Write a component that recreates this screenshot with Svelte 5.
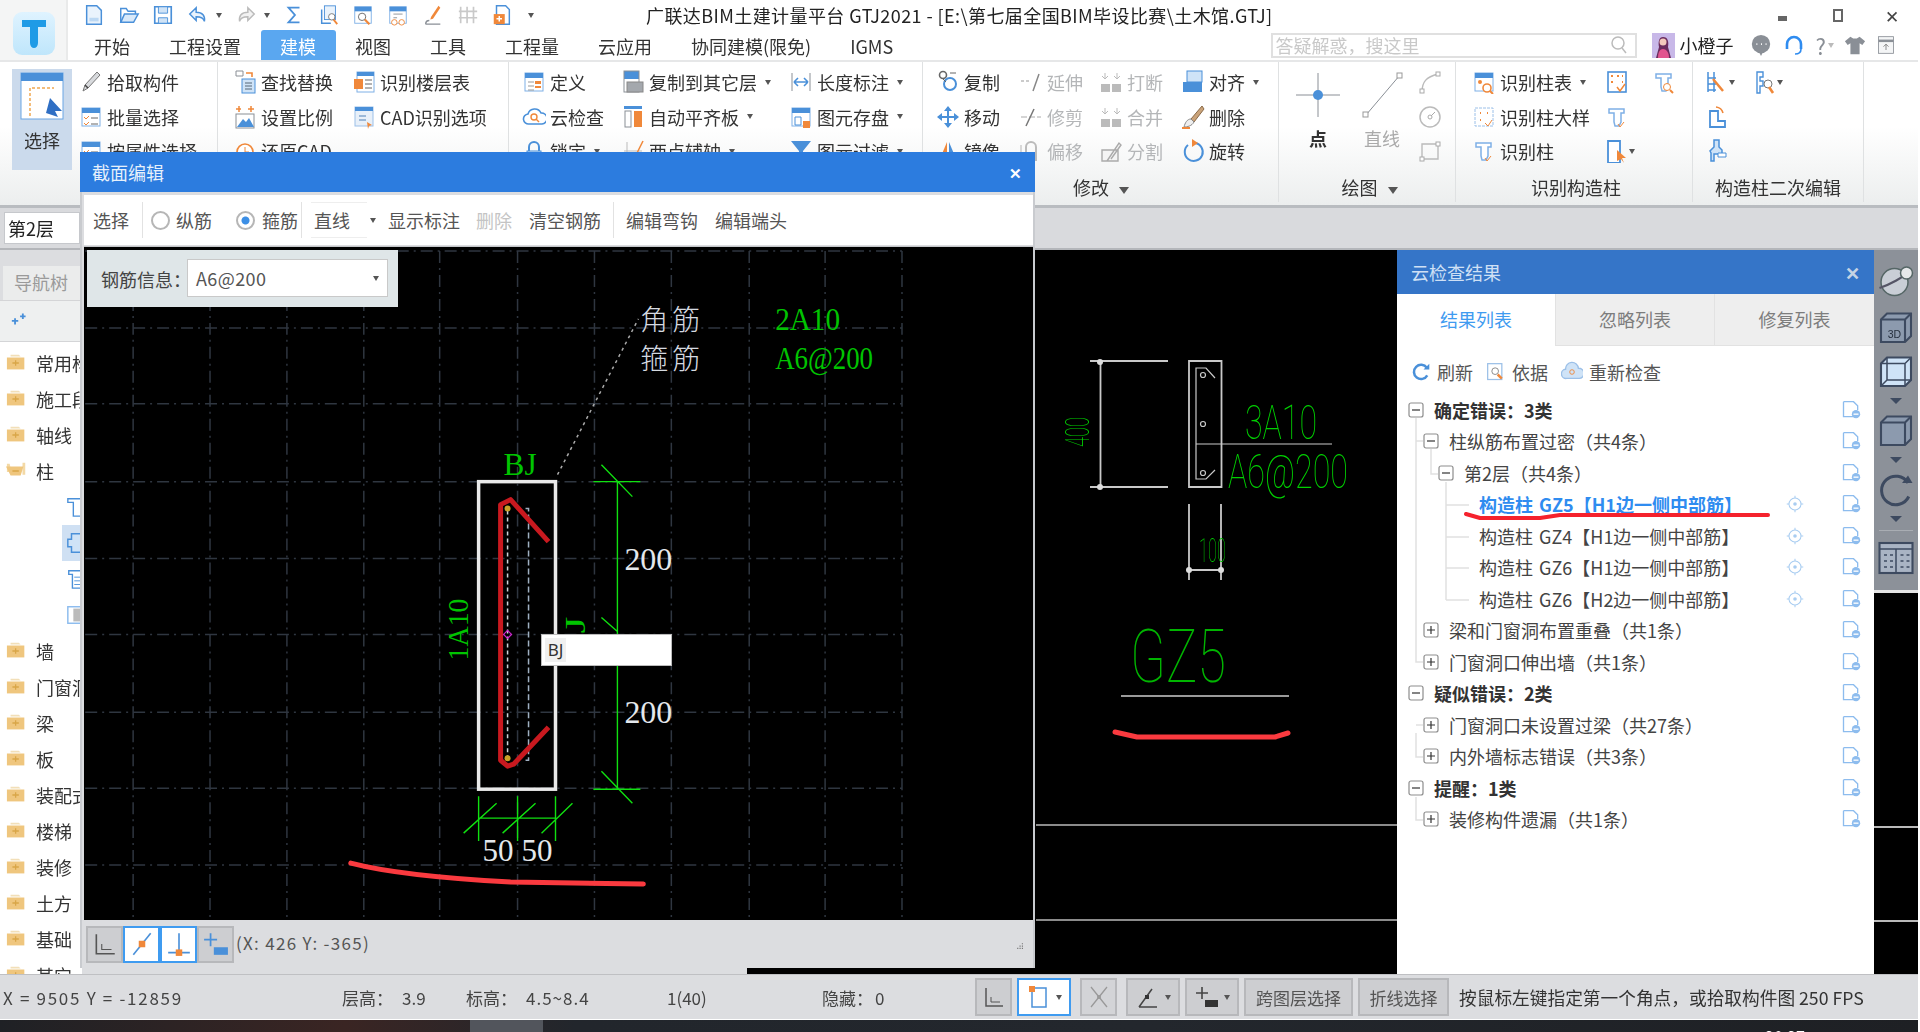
<script>
  const B = '#4a90d9', O = '#f0883a', G = '#8a8f96';
  const win = `<rect x="3" y="3" width="18" height="18" fill="#fff" stroke="#7fb0e6"/><rect x="3" y="3" width="18" height="5" fill="${B}"/>`;
  const col = `<path d="M4 4h15v4h-3v9l-2 4h-4l-1-4V8H4z" fill="#fff" stroke="#7fb0e6" stroke-width="1.5"/>`;
  const cube = `<path d="M2 7l4-4h16v15l-4 4H2z" fill="#8c9aae" stroke="#3d4a60" stroke-width="1.4"/><path d="M2 7h16v15M18 7l4-4" fill="none" stroke="#3d4a60" stroke-width="1.4"/>`;
  const icons = {
    doc: `<path d="M4 2h11l5 5v15H4z" fill="#eaf3fc" stroke="${B}" stroke-width="1.6"/><path d="M7 15h10v4H7z" fill="#bcd8f3"/>`,
    open: `<path d="M3 20V5h6l2 3h8v3" fill="none" stroke="${B}" stroke-width="1.6"/><path d="M3 20l4-9h15l-5 9z" fill="#d9e9f9" stroke="${B}" stroke-width="1.6"/>`,
    save: `<path d="M3 3h18v18H3z" fill="#fff" stroke="${B}" stroke-width="1.8"/><path d="M7 3h10v7H7zM7 15h10v6H7z" fill="#d0e3f6" stroke="${B}"/>`,
    undo: `<path d="M10 4L3 11l7 7v-4c5 0 8 1 9 5 1-6-2-10-9-10z" fill="#eaf3fc" stroke="${B}" stroke-width="1.6"/>`,
    redo: `<path d="M14 4l7 7-7 7v-4c-5 0-8 1-9 5-1-6 2-10 9-10z" fill="#f2f2f2" stroke="#bbb" stroke-width="1.6"/>`,
    sigma: `<path d="M18 4H6l7 8-7 8h12" fill="none" stroke="${B}" stroke-width="2"/>`,
    q1: `<rect x="7" y="2" width="12" height="15" fill="#eaf3fc" stroke="${B}"/><path d="M4 6v15h10" fill="none" stroke="${B}" stroke-width="1.6"/><circle cx="15" cy="14" r="3.5" fill="#fff" stroke="#777"/><path d="M17 17l4 5" stroke="${O}" stroke-width="2"/>`,
    q2: `${win}<circle cx="11" cy="14" r="4" fill="#fff" stroke="#666"/><path d="M14 17l5 5" stroke="${O}" stroke-width="2.4"/>`,
    q3: `${win}<path d="M7 11h10M7 15h4" stroke="${G}"/><circle cx="8" cy="20" r="3" fill="#fff" stroke="${O}"/><circle cx="16" cy="20" r="3" fill="#fff" stroke="${O}"/>`,
    q4: `<path d="M18 2l2 2-8 12-3 1 1-3z" fill="${O}"/><path d="M4 22c0-3 2-4 4-4M4 22h16" fill="none" stroke="${G}" stroke-width="1.5"/>`,
    q5: `<path d="M4 3v18M11 3v18M18 3v18M2 8h20M2 15h20" stroke="#c9c9c9" stroke-width="1.8"/>`,
    q6: `<path d="M6 2h10l4 4v16H6z" fill="#fff" stroke="${B}" stroke-width="1.6"/><rect x="3" y="11" width="12" height="11" fill="${O}"/><path d="M6 16h6M9 13v6" stroke="#fff" stroke-width="1.6"/>`,
    pick: `<path d="M18 2l3 3L9 18l-5 3 2-6z" fill="#d8dadd" stroke="#777"/><path d="M6 15l3 3" stroke="#444" stroke-width="1.5"/>`,
    batch: `${win}<path d="M5 12l2 2 3-3M5 18l2 2 3-3" stroke="${O}" fill="none"/><path d="M12 13h7M12 19h7" stroke="#666"/>`,
    find: `<path d="M3 1h7v5H3z" fill="#fff" stroke="${G}"/><path d="M13 3h6v4" fill="none" stroke="${O}" stroke-width="1.6"/><rect x="9" y="9" width="13" height="14" fill="#cfe3f7" stroke="${B}"/><path d="M12 13h7M12 16h7M12 19h7" stroke="#567"/>`,
    scale: `<path d="M6 1v6M18 1v6M3 4h5M15 4h6" stroke="${O}" stroke-width="1.5"/><rect x="3" y="9" width="18" height="14" fill="#fff" stroke="${G}"/><path d="M4 22l6-8 3 3 3-4 5 9z" fill="${B}"/>`,
    clock: `<circle cx="12" cy="13" r="8" fill="#fff" stroke="${O}" stroke-width="1.6"/><path d="M12 8v5h4" stroke="${O}" fill="none"/>`,
    floors: `<rect x="5" y="2" width="17" height="20" fill="#fff" stroke="#7fb0e6"/><rect x="5" y="2" width="17" height="4" fill="${B}"/><rect x="2" y="9" width="9" height="10" fill="${O}"/><path d="M13 10h7M13 14h7M13 18h7" stroke="#666"/>`,
    cad: `<rect x="3" y="2" width="18" height="19" fill="#e8f0f9" stroke="#9cc0e8"/><rect x="3" y="2" width="18" height="4" fill="${B}"/><path d="M7 11h7M7 15h7" stroke="#9bb8d8" stroke-width="2"/><path d="M15 17l5 3-3 1-1 3z" fill="${O}"/>`,
    define: `${win}<path d="M6 12h6M6 16h6M6 20h6" stroke="#999"/><rect x="13" y="11" width="6" height="3" fill="${O}"/><path d="M13 17h6" stroke="${O}" stroke-width="2"/>`,
    cloud: `<path d="M7 19a5 5 0 01-1-10 7 7 0 0113-1 5.5 5.5 0 011 11z" fill="#fff" stroke="${B}" stroke-width="1.6"/><circle cx="12" cy="12" r="3" fill="none" stroke="${O}" stroke-width="1.4"/><path d="M14 14l3 3" stroke="${O}" stroke-width="1.4"/>`,
    lock: `<path d="M7 13V8a5 5 0 0110 0v5" fill="none" stroke="${B}" stroke-width="2"/><rect x="5" y="12" width="14" height="10" fill="#cfe3f7" stroke="${B}"/>`,
    copyf: `<rect x="3" y="1" width="15" height="8" fill="${B}"/><rect x="3" y="1" width="15" height="21" fill="none" stroke="${G}"/><rect x="6" y="12" width="16" height="10" fill="#a4a8ad" stroke="#888"/>`,
    flush: `<rect x="3" y="1" width="18" height="3" fill="${B}"/><rect x="4" y="6" width="6" height="16" fill="#fff" stroke="${G}"/><rect x="13" y="6" width="8" height="16" fill="${O}"/>`,
    assist: `<path d="M3 12h18M6 3v18" stroke="#bbb"/><path d="M12 22L22 2" stroke="${O}" stroke-width="1.5"/>`,
    len: `<path d="M3 3v18M21 3v18" stroke="${G}"/><path d="M5 12h14M5 12l4-4M5 12l4 4M19 12l-4-4M19 12l-4 4" stroke="${B}" stroke-width="1.6" fill="none"/>`,
    store: `${win}<path d="M6 12h6v8H6z" fill="none" stroke="${B}"/><rect x="14" y="16" width="7" height="7" fill="${O}"/>`,
    filter: `<path d="M2 2h20l-8 10v11l-4-3v-8z" fill="${B}"/>`,
    copy: `<circle cx="7" cy="5" r="3.5" fill="none" stroke="#666" stroke-width="1.6"/><path d="M14 3h6" stroke="#666"/><circle cx="14" cy="14" r="6" fill="#fff" stroke="${B}" stroke-width="2"/><path d="M7 9l3 3" stroke="#666"/>`,
    move: `<path d="M12 2v20M2 12h20" stroke="${B}" stroke-width="2"/><path d="M12 1l-4 5h8zM12 23l-4-5h8zM1 12l5-4v8zM23 12l-5-4v8z" fill="${B}"/>`,
    mirror: `<path d="M3 22L11 3v19z" fill="${O}"/><path d="M13 22V3l8 19z" fill="${B}"/>`,
    ext: `<path d="M2 11h10" stroke="#bbb" stroke-dasharray="3 2" stroke-width="1.5"/><path d="M14 21l6-17" stroke="#888" stroke-width="1.5"/>`,
    trim: `<path d="M2 12h20" stroke="#aaa" stroke-dasharray="6 2"/><path d="M7 21l8-17" stroke="#777" stroke-width="1.5"/>`,
    off: `<path d="M7 22V8a5 5 0 0110 0v14" fill="none" stroke="#bbb" stroke-width="2"/><path d="M2 22V6" stroke="#ccc" stroke-width="1.5"/>`,
    brk: `<rect x="2" y="14" width="9" height="8" fill="#bbb"/><rect x="13" y="14" width="9" height="8" fill="#bbb"/><path d="M6 3v6M3 6l3 3 3-3M18 3v6M15 6l3 3 3-3" stroke="#bbb" fill="none"/>`,
    split: `<path d="M3 22V11h16v11zM8 22l12-18 2 2-10 14" fill="#f4f4f4" stroke="#aaa" stroke-width="1.4"/>`,
    align: `<rect x="6" y="1" width="15" height="11" fill="#cfe3f7" stroke="${B}"/><rect x="2" y="12" width="19" height="10" fill="${B}"/>`,
    del: `<path d="M21 1L10 14l3 3L23 4z" fill="#caa37a" stroke="#8a6a48"/><path d="M10 14c-4 0-6 4-7 8 3 0 8-1 10-5z" fill="#eee" stroke="#888"/><path d="M1 23h8" stroke="${O}" stroke-width="2"/>`,
    rot: `<path d="M14 4a9 9 0 11-7 2" fill="none" stroke="${B}" stroke-width="2"/><path d="M11 0l6 4-6 4z" fill="${O}"/>`,
    arc: `<path d="M4 22c0-10 4-15 16-18" fill="none" stroke="#bbb" stroke-width="1.4"/><rect x="2" y="19" width="4" height="4" fill="#fff" stroke="#aaa"/><rect x="18" y="2" width="4" height="4" fill="#fff" stroke="#aaa"/>`,
    circ: `<circle cx="12" cy="12" r="10" fill="none" stroke="#bbb" stroke-width="1.5"/><circle cx="12" cy="12" r="2" fill="none" stroke="#aaa"/><path d="M13 11l4-4" stroke="#aaa"/>`,
    rct: `<path d="M4 20V5h16v15z" fill="none" stroke="#bbb" stroke-width="1.4"/><rect x="2" y="18" width="4" height="4" fill="#fff" stroke="#aaa"/><rect x="18" y="3" width="4" height="4" fill="#fff" stroke="#aaa"/>`,
    c1: `${win}<circle cx="8" cy="12" r="2" fill="${O}"/><circle cx="15" cy="18" r="4" fill="#fff" stroke="${O}" stroke-width="1.6"/><path d="M18 21l3 3" stroke="${O}" stroke-width="2"/>`,
    c2: `<rect x="3" y="3" width="18" height="18" fill="#fff" stroke="#9cc0e8" stroke-dasharray="3 1"/><path d="M8 8h1M15 8h1M8 15h1" stroke="${O}" stroke-width="2"/><path d="M13 18l3 3 4-6" stroke="${O}" fill="none"/>`,
    c3: `${col}<path d="M13 19l2 3 4-5" stroke="${O}" fill="none"/>`,
    c4: `<rect x="3" y="2" width="18" height="20" fill="#fff" stroke="${B}" stroke-width="1.6"/><path d="M6 6h2M12 6h2M17 6h1M6 12h2M17 12h1" stroke="${O}" stroke-width="2"/><path d="M12 17l3 4 5-7" stroke="${O}" fill="none" stroke-width="1.5"/>`,
    c5: `${col}<circle cx="15" cy="17" r="3.5" fill="#fff" stroke="${O}"/><path d="M18 20l3 3" stroke="${O}" stroke-width="2"/>`,
    c6: `<path d="M3 2h12v22H3z" fill="#fff" stroke="${B}" stroke-width="1.8"/><path d="M12 11l9 8-4 0 2 5-3-4-4 2z" fill="${O}"/>`,
    e1: `<path d="M3 2v20M9 2v20M3 8h8M3 14h8M3 20h8" stroke="${B}" stroke-width="1.5"/><path d="M8 9l10 12" stroke="${O}" stroke-width="2.5"/>`,
    e2: `<path d="M4 2h6v5H7v4h3v5H7v7H4z" fill="#fff" stroke="${B}" stroke-width="1.4"/><circle cx="15" cy="14" r="4" fill="#fff" stroke="#777"/><path d="M16 17l4 6" stroke="${O}" stroke-width="2.6"/>`,
    e3: `<path d="M5 6h8v10h7v6H5z" fill="#fff" stroke="${B}" stroke-width="1.8"/><path d="M11 2a8 8 0 017 6" fill="none" stroke="${O}" stroke-width="1.6"/>`,
    e4: `<path d="M9 1h5v7l3 3v4H9v7H6v-8l-1-2 4-4z" fill="#cfe3f7" stroke="${B}" stroke-width="1.5"/><path d="M13 14h8v4h-8z" fill="#fff" stroke="${B}"/>`,
    angle: `<path d="M4 3v18h17" fill="none" stroke="#555" stroke-width="1.5"/><path d="M9 12v5h9" fill="none" stroke="#555"/>`,
    snap1: `<path d="M4 22L20 2" stroke="${B}" stroke-width="1.5"/><rect x="9" y="9" width="6" height="6" fill="${O}"/>`,
    snap2: `<path d="M12 2v18M2 20h20" stroke="${B}" stroke-width="1.5"/><rect x="9" y="17" width="6" height="6" fill="${O}"/>`,
    plus: `<path d="M7 2v12M1 8h12" stroke="${B}" stroke-width="1.6"/><rect x="10" y="15" width="13" height="7" fill="${B}"/>`,
    plusd: `<path d="M7 2v12M1 8h12" stroke="#444" stroke-width="1.6"/><rect x="10" y="15" width="13" height="7" fill="#333"/>`,
    box: `<rect x="5" y="3" width="14" height="19" fill="#fff" stroke="${B}" stroke-width="1.5"/><rect x="2" y="1" width="6" height="6" fill="${O}"/>`,
    cross: `<path d="M4 2l16 20M20 2L4 22" stroke="#999" stroke-width="1.3"/><circle cx="12" cy="12" r="2" fill="#999"/>`,
    ang2: `<path d="M3 22h18M3 22L16 4" fill="none" stroke="#444" stroke-width="1.5"/><rect x="9" y="10" width="4" height="4" fill="#333"/>`,
    grip: `<path d="M10 2h2v2h-2zM10 6h2v2h-2zM6 6h2v2H6zM10 10h2v2h-2zM6 10h2v2H6zM2 10h2v2H2z" fill="#777"/>`,
    sphere: `<circle cx="11" cy="12" r="9" fill="#c9ced6" stroke="#566"/><path d="M1 16c6-2 16-7 21-12" stroke="#556" fill="none" stroke-width="1.5"/><circle cx="19" cy="6" r="4" fill="#e6e8ea" stroke="#566"/>`,
    cube3: cube,
    cube3d: `${cube}<text x="6.500" y="19.500" font-size="7" font-family="Liberation Sans" fill="#26303f">3D</text>`,
    cubeo: `<path d="M2 7l4-4h16v15l-4 4H2z" fill="#cfe3f7" stroke="#3d4a60" stroke-width="1.4"/><path d="M6 3v15h16M2 22l4-4M2 7h16v15M18 7l4-4" fill="none" stroke="#3d4a60"/>`,
    rotate: `<path d="M20 8a9.5 9.5 0 10.5 9" fill="none" stroke="#3d4a60" stroke-width="2"/><path d="M16 8h7l-3-5z" fill="#3d4a60"/>`,
    panel: `<rect x="1" y="2" width="22" height="20" fill="#a9b4c4" stroke="#3d4a60" stroke-width="1.4"/><path d="M1 6h22M12 6v16" stroke="#3d4a60"/><path d="M4 10h2M8 10h2M4 14h2M8 14h2M4 18h2M8 18h2M15 10h2M19 10h2M15 14h2M19 14h2M15 18h2M19 18h2" stroke="#3d4a60"/>`,
    refresh: `<path d="M19 7a8.5 8.5 0 10.5 9" fill="none" stroke="${B}" stroke-width="3"/><path d="M15 9h7V2z" fill="${B}"/>`,
    basis: `<rect x="2" y="2" width="17" height="19" fill="#fff" stroke="#9cc0e8" stroke-width="1.5"/><circle cx="11" cy="11" r="4" fill="none" stroke="#777"/><path d="M14 15l5 5" stroke="${O}" stroke-width="3"/>`,
    recheck: `<path d="M6 19a5 5 0 01-1-10 7 7 0 0114-1 5.5 5.5 0 011 11z" fill="#cfe3f7" stroke="#9cc0e8" stroke-width="1.5"/><circle cx="12" cy="12" r="2.5" fill="none" stroke="${O}"/>`,
    eye: `<circle cx="12" cy="12" r="8" fill="none" stroke="#a9cdf1" stroke-width="1.4"/><circle cx="12" cy="12" r="2.4" fill="#a9cdf1"/><path d="M12 1v3M12 20v3M1 12h3M20 12h3" stroke="#a9cdf1" stroke-width="1.4"/>`,
    sheet: `<path d="M3 2h12l5 5v5M20 20H3V2" fill="#fff" stroke="#8dbcee" stroke-width="1.6"/><circle cx="18" cy="17" r="5" fill="#8dbcee"/><path d="M15 17h6" stroke="#fff" stroke-width="1.6"/>`,
    minus: `<rect x="1.500" y="1.500" width="21" height="21" rx="3" fill="#fff" stroke="#8d8d8d" stroke-width="1.8"/><path d="M6 12h12" stroke="#333" stroke-width="1.8"/>`,
    add: `<rect x="1.500" y="1.500" width="21" height="21" rx="3" fill="#fff" stroke="#8d8d8d" stroke-width="1.8"/><path d="M6 12h12M12 6v12" stroke="#333" stroke-width="1.8"/>`,
    folder: `<path d="M5 3h9l2 2H5z" fill="#f2dfb8"/><path d="M1 6h19v13H1z" fill="#efc67e"/><path d="M7 12h7M10.500 9v6" stroke="#d9a648" stroke-width="1.4"/>`,
    folderO: `<path d="M1 4h3l2 9H1zM18 3h3v13h-3z" fill="#f3d9a6"/><path d="M0 7h19l-3 10H5z" fill="#efc67e"/><path d="M7 12h7" stroke="#d9a648" stroke-width="1.6"/>`,
    navAdd: `<path d="M2 13h7M5.500 10v7M11 8h6M14 5v6" stroke="${B}" stroke-width="2"/>`,
    sub1: `<path d="M2 3h19v4h-4v15H8V7H2z" fill="#fff" stroke="${B}" stroke-width="1.5"/>`,
    sub2: `<path d="M6 2h14v20H6v-6H2V8h4z" fill="#cfe3f7" stroke="${B}" stroke-width="1.6"/>`,
    sub3: `<path d="M3 3h18v4h-2v15H7V7H3z" fill="#fff" stroke="${B}" stroke-width="1.5"/><path d="M9 10h8M9 14h8M9 18h8" stroke="${B}"/>`,
    sub4: `<rect x="2" y="3" width="20" height="18" fill="#fff" stroke="#8dbcee" stroke-width="1.6"/><path d="M8 5h12v14H8z" fill="#bbb"/>`,
    shirt: `<path d="M7 3L1 8l3 4 3-2v12h10V10l3 2 3-4-6-5-3 2h-4z" fill="#8a8f96"/>`,
    bubble: `<circle cx="12" cy="11" r="10" fill="#8a8f96"/><path d="M10 20l2 4 2-4z" fill="#8a8f96"/><path d="M7 11h1M12 11h1M17 11h1" stroke="#fff" stroke-width="2"/>`,
    headset: `<path d="M5 16V11a7 7 0 0114 0v5" fill="none" stroke="#2f8cf0" stroke-width="2.6"/><path d="M19 16c0 3-2 5-6 5" fill="none" stroke="#2f8cf0" stroke-width="1.6"/>`,
    pin: `<rect x="3" y="2" width="18" height="20" fill="#f4f5f6" stroke="${G}"/><path d="M3 7h18" stroke="${G}" stroke-width="3"/><path d="M12 11v7M9 14l3-3 3 3" stroke="#777" fill="none"/>`
  };

  const qat = [
    { i: 'doc' }, { i: 'open' }, { i: 'save' }, { i: 'undo', caret: true }, { i: 'redo', caret: true },
    { i: 'sigma' }, { i: 'q1' }, { i: 'q2' }, { i: 'q3' }, { i: 'q4' }, { i: 'q5' }, { i: 'q6' }
  ];
  const tabs = ['开始', '工程设置', '建模', '视图', '工具', '工程量', '云应用', '协同建模(限免)', 'IGMS'];

  const groups = [
    { w: 218, pad: 12, big: true, cols: [
      { w: 136, items: [{ i: 'pick', t: '拾取构件' }, { i: 'batch', t: '批量选择' }, { i: 'batch', t: '按属性选择' }] }
    ] },
    { w: 291, pad: 15, cols: [
      { w: 119, items: [{ i: 'find', t: '查找替换' }, { i: 'scale', t: '设置比例' }, { i: 'clock', t: '还原CAD' }] },
      { w: 140, items: [{ i: 'floors', t: '识别楼层表' }, { i: 'cad', t: 'CAD识别选项' }] }
    ] },
    { w: 414, pad: 13, cols: [
      { w: 99, items: [{ i: 'define', t: '定义' }, { i: 'cloud', t: '云检查' }, { i: 'lock', t: '锁定', c: 1 }] },
      { w: 168, items: [{ i: 'copyf', t: '复制到其它层', c: 1 }, { i: 'flush', t: '自动平齐板', c: 1 }, { i: 'assist', t: '两点辅轴', c: 1 }] },
      { w: 120, items: [{ i: 'len', t: '长度标注', c: 1 }, { i: 'store', t: '图元存盘', c: 1 }, { i: 'filter', t: '图元过滤', c: 1 }] }
    ] },
    { w: 356, pad: 13, label: '修改', caret: true, cols: [
      { w: 83, items: [{ i: 'copy', t: '复制' }, { i: 'move', t: '移动' }, { i: 'mirror', t: '镜像' }] },
      { w: 80, items: [{ i: 'ext', t: '延伸', off: 1 }, { i: 'trim', t: '修剪', off: 1 }, { i: 'off', t: '偏移', off: 1 }] },
      { w: 82, items: [{ i: 'brk', t: '打断', off: 1 }, { i: 'brk', t: '合并', off: 1 }, { i: 'split', t: '分割', off: 1 }] },
      { w: 90, items: [{ i: 'align', t: '对齐', c: 1 }, { i: 'del', t: '删除' }, { i: 'rot', t: '旋转' }] }
    ] },
    { w: 177, pad: 17, label: '绘图', caret: true, draw: true, cols: [] },
    { w: 237, pad: 16, label: '识别构造柱', cols: [
      { w: 133, items: [{ i: 'c1', t: '识别柱表', c: 1 }, { i: 'c2', t: '识别柱大样' }, { i: 'c3', t: '识别柱' }] },
      { w: 47, items: [{ i: 'c4' }, { i: 'c3' }, { i: 'c6', c: 1 }] },
      { w: 30, items: [{ i: 'c5' }] }
    ] },
    { w: 171, pad: 12, label: '构造柱二次编辑', cols: [
      { w: 48, items: [{ i: 'e1', c: 1 }, { i: 'e3' }, { i: 'e4' }] },
      { w: 50, items: [{ i: 'e2', c: 1 }] }
    ] }
  ];

  const nav = [
    { t: '常用构件类型' }, { t: '施工段' }, { t: '轴线' }, { t: '柱', open: true },
    { sub: 'sub1' }, { sub: 'sub2', sel: true }, { sub: 'sub3' }, { sub: 'sub4' },
    { t: '墙' }, { t: '门窗洞' }, { t: '梁' }, { t: '板' }, { t: '装配式' }, { t: '楼梯' }, { t: '装修' }, { t: '土方' }, { t: '基础' }, { t: '其它' }
  ];

  const gridX = [132, 209, 286, 363, 439, 517, 594, 671, 749, 825, 902];
  const gridY = [250, 327, 403, 481, 558, 634, 712, 788, 865];

  const tree = [
    { lv: 0, box: 'minus', bold: 1, t: '确定错误：3类' },
    { lv: 1, box: 'minus', t: '柱纵筋布置过密（共4条）' },
    { lv: 2, box: 'minus', t: '第2层（共4条）' },
    { lv: 3, t: '构造柱 GZ5【H1边一侧中部筋】', eye: 1, on: 1 },
    { lv: 3, t: '构造柱 GZ4【H1边一侧中部筋】', eye: 1 },
    { lv: 3, t: '构造柱 GZ6【H1边一侧中部筋】', eye: 1 },
    { lv: 3, t: '构造柱 GZ6【H2边一侧中部筋】', eye: 1 },
    { lv: 1, box: 'add', t: '梁和门窗洞布置重叠（共1条）' },
    { lv: 1, box: 'add', t: '门窗洞口伸出墙（共1条）' },
    { lv: 0, box: 'minus', bold: 1, t: '疑似错误：2类' },
    { lv: 1, box: 'add', t: '门窗洞口未设置过梁（共27条）' },
    { lv: 1, box: 'add', t: '内外墙标志错误（共3条）' },
    { lv: 0, box: 'minus', bold: 1, t: '提醒：1类' },
    { lv: 1, box: 'add', t: '装修构件遗漏（共1条）' }
  ];
</script>

{#snippet icon(name, size = 24)}
  <svg class="ic" width={size} height={size} viewBox="0 0 24 24">{@html icons[name]}</svg>
{/snippet}

<div class="app">
  <div class="top">
    <div class="logoCol">
      <div class="logo">
        <svg width="30" height="34" viewBox="0 0 30 34"><path d="M3 3h24v7h-8v16c0 3-2 5-4 5s-4-2-4-5V10H3z" fill="#1f9be6"/></svg>
      </div>
    </div>
    <div class="topMain">
      <div class="titleRow">
        <div class="qat">
          {#each qat as q}
            <span class="qbtn" class:wide={q.caret}>
              {@render icon(q.i, 22)}
              {#if q.caret}<i class="caret"></i>{/if}
            </span>
          {/each}
          <i class="caret qend"></i>
        </div>
        <div class="title">广联达BIM土建计量平台 GTJ2021 - [E:\第七届全国BIM毕设比赛\土木馆.GTJ]</div>
        <div class="winBtns">
          <span class="wmin"></span>
          <span class="wrest"></span>
          <span class="wclose">✕</span>
        </div>
      </div>
      <div class="tabRow">
        <div class="tabs">
          {#each tabs as t}
            <span class="tab" class:active={t === '建模'}>{t}</span>
          {/each}
        </div>
        <div class="search">
          <span>答疑解惑，搜这里</span>
          <svg width="18" height="20" viewBox="0 0 18 20"><circle cx="8" cy="8" r="6" fill="none" stroke="#bbb" stroke-width="1.5"/><path d="M12 13l4 5" stroke="#bbb" stroke-width="1.5"/></svg>
        </div>
        <span class="avatar">
          <svg width="23" height="25" viewBox="0 0 23 25"><rect width="23" height="25" fill="#c8b8e8"/><path d="M11 4c5 0 6 5 5 10l3 11H4l3-11C6 9 7 4 11 4z" fill="#6b2c5e"/><circle cx="11" cy="9" r="3.500" fill="#f3c9bc"/><path d="M6 25c0-6 2-9 5-9s6 3 6 9z" fill="#e2558f"/></svg>
        </span>
        <span class="user">小橙子</span>
        <div class="userTools">
          {@render icon('bubble', 22)}
          {@render icon('headset', 24)}
          <span class="help">?<i class="caret"></i></span>
          {@render icon('shirt', 22)}
          {@render icon('pin', 20)}
        </div>
      </div>
    </div>
  </div>

  <div class="ribbon">
    {#each groups as g}
      <div class="group" style="width:{g.w}px;padding-left:{g.pad}px">
        <div class="gBody">
          {#if g.big}
            <div class="bigSel">
              <svg width="44" height="48" viewBox="0 0 44 48"><rect x="1" y="1" width="42" height="46" fill="#fff" stroke="#6aa5e3"/><rect x="1" y="1" width="42" height="8" fill="#4a90d9"/><path d="M10 44V16h24" fill="none" stroke="#f0a850" stroke-dasharray="3 2" stroke-width="1.5"/><path d="M30 26l12 13-7 0 3 6-12-4z" fill="#2f6fc4"/></svg>
              <span>选择</span>
            </div>
          {/if}
          {#if g.draw}
            <div class="bigDraw">
              <svg width="44" height="48" viewBox="0 0 44 48"><path d="M22 2v44M0 24h44" stroke="#8a8f96"/><circle cx="22" cy="24" r="5" fill="#4a90d9"/></svg>
              <span>点</span>
            </div>
            <div class="bigDraw off">
              <svg width="44" height="48" viewBox="0 0 44 48"><path d="M6 44L40 4" stroke="#8a8f96"/><rect x="3" y="41" width="5" height="5" fill="#fff" stroke="#999"/><rect x="37" y="2" width="5" height="5" fill="#fff" stroke="#999"/></svg>
              <span>直线</span>
            </div>
            <div class="drawCol">
              {@render icon('arc')}
              {@render icon('circ')}
              {@render icon('rct')}
            </div>
          {/if}
          {#each g.cols as c}
            <div class="col" style="width:{c.w}px">
              {#each c.items as it}
                <div class="rItem" class:off={it.off}>
                  {@render icon(it.i)}
                  {#if it.t}<span class="rText">{it.t}</span>{/if}
                  {#if it.c}<i class="caret"></i>{/if}
                </div>
              {/each}
            </div>
          {/each}
        </div>
        <div class="gLabel">{g.label ?? ''}{#if g.caret}<i class="caret big"></i>{/if}</div>
      </div>
    {/each}
  </div>

  <div class="floorBar"><span class="floor">第2层</span></div>

  <div class="main">
    <aside class="nav">
      <div class="navHead"><span class="navTab">导航树</span></div>
      <div class="navTools">{@render icon('navAdd', 22)}</div>
      <div class="navList">
        {#each nav as n}
          {#if n.sub}
            <div class="navSub" class:sel={n.sel}>{@render icon(n.sub, 22)}</div>
          {:else}
            <div class="navRow">{@render icon(n.open ? 'folderO' : 'folder', 22)}<span>{n.t}</span></div>
          {/if}
        {/each}
      </div>
    </aside>

    <div class="bgCanvas">
      <svg class="drawing" viewBox="82 250 1315 724">
        <path d="M1036 825H1397M1036 920H1397" stroke="#b9b9b9" stroke-width="1.5"/>
        <rect x="82" y="968" width="665" height="6" fill="#dcdde0"/>
        <g class="w">
          <path d="M1090 361h78M1090 487h78M1100.500 361v126M1189 361h32.500v126H1189zM1189 504v76M1221 504v76M1189 570h32"/>
          <path class="thin" d="M1215 378l-9-10h-10v111h10l9-9M1196 444h136"/>
          <circle class="thin" cx="1203" cy="375" r="2.500"/><circle class="thin" cx="1203" cy="424" r="2.500"/><circle class="thin" cx="1203" cy="473" r="2.500"/>
        </g>
        <g fill="#ddd"><circle cx="1100" cy="362" r="3"/><circle cx="1100" cy="487" r="3"/><circle cx="1189" cy="570" r="3"/><circle cx="1221" cy="570" r="3"/></g>
        <text class="cad" x="1245" y="439" textLength="72" lengthAdjust="spacingAndGlyphs" font-size="48">3A10</text>
        <text class="cad" x="1228" y="488" textLength="120" lengthAdjust="spacingAndGlyphs" font-size="48">A6@200</text>
        <text class="cad" transform="translate(1089 447) rotate(-90)" textLength="30" lengthAdjust="spacingAndGlyphs" font-size="33">400</text>
        <text class="cad" x="1199" y="562" textLength="27" lengthAdjust="spacingAndGlyphs" font-size="33">100</text>
        <text class="cad dim" x="1130" y="682" textLength="96" lengthAdjust="spacingAndGlyphs" font-size="75">GZ5</text>
        <path d="M1121 696h168" stroke="#9a9a9a" stroke-width="2"/>
        <path class="redInk" d="M1115 732l22 5h138l13-4"/>
      </svg>
    </div>

    <div class="cloud">
      <div class="cloudHead"><span>云检查结果</span><span class="cloudX">✕</span></div>
      <div class="cloudTabs">
        <span class="cTab active">结果列表</span>
        <span class="cTab">忽略列表</span>
        <span class="cTab">修复列表</span>
      </div>
      <div class="cloudActs">
        <span class="act">{@render icon('refresh', 20)}刷新</span>
        <span class="act">{@render icon('basis', 20)}依据</span>
        <span class="act">{@render icon('recheck', 22)}重新检查</span>
      </div>
      <div class="tree">
        {#each tree as r}
          <div class="tRow" class:bold={r.bold} class:on={r.on} style="padding-left:{11 + r.lv * 15}px">
            <span class="tBox">{#if r.box}{@render icon(r.box, 16)}{/if}</span>
            <span class="tText">{r.t}</span>
            <span class="tSlot eyeSlot">{#if r.eye}{@render icon('eye', 18)}{/if}</span>
            <span class="tSlot">{@render icon('sheet', 20)}</span>
          </div>
        {/each}
      </div>
      <svg class="treeInk" viewBox="1397 250 477 724">
        <path d="M1416 418V662H1423M1416 441H1423M1431 449V474H1438M1446 482V600M1446 505H1469M1446 537H1469M1446 568H1469M1446 600H1469M1416 733V757H1423M1416 725H1423M1416 797V820H1423" fill="none" stroke="#e1e1e1" stroke-width="1.5"/>
        <path class="redInk thinInk" d="M1466 514l14 4h60l20-3h208"/>
      </svg>
    </div>

    <div class="rTools">
      <div class="rToolBar">
        {@render icon('sphere', 36)}
        {@render icon('cube3d', 36)}
        {@render icon('cubeo', 36)}
        <i class="caret dark"></i>
        {@render icon('cube3', 36)}
        <i class="caret dark"></i>
        {@render icon('rotate', 36)}
        <i class="caret dark"></i>
        <hr />
        {@render icon('panel', 36)}
      </div>
      <div class="rLine first"></div>
      <div class="rLine"></div>
    </div>

    <div class="dialog">
      <div class="dlgHead"><span>截面编辑</span><span class="dlgX">✕</span></div>
      <div class="dlgTools">
        <span class="dt t1">选择</span>
        <i class="tsep s1"></i>
        <span class="radio r1"></span><span class="dt l1">纵筋</span>
        <span class="radio on r2"></span><span class="dt l2">箍筋</span>
        <i class="tsep s2"></i>
        <span class="dt combo">直线</span><i class="caret"></i>
        <span class="dt m1">显示标注</span>
        <span class="dt m2 off">删除</span>
        <span class="dt m3">清空钢筋</span>
        <i class="tsep s3"></i>
        <span class="dt m4">编辑弯钩</span>
        <span class="dt m5">编辑端头</span>
      </div>
      <div class="dlgCanvas">
        <svg class="drawing" viewBox="84 246 948 674">
          <g class="grid">
            {#each gridX as x}<line x1={x} x2={x} y1="250" y2="920" />{/each}
            {#each gridY as y}<line x1="84" x2="902" y1={y} y2={y} />{/each}
          </g>
          <path d="M557 474L638 318" stroke="#aaa" stroke-width="1.5" stroke-dasharray="3 4"/>
          <rect x="478" y="481" width="77" height="308" fill="none" stroke="#e9e9e9" stroke-width="3.500"/>
          <path d="M507 510V760" stroke="#cfd3d8" stroke-width="1.5" stroke-dasharray="4 3"/>
          <path d="M525 508h3V760h-3" fill="none" stroke="#9fb0c2" stroke-width="1.5" stroke-dasharray="6 3"/>
          <path d="M548 541L510 499l-10 5V760l7 6 6-2L548 727" fill="none" stroke="#c8191f" stroke-width="5" stroke-linejoin="round"/>
          <circle cx="507" cy="508" r="3" fill="#c9a227"/><circle cx="507" cy="758" r="3" fill="#c9a227"/>
          <path d="M507 630l4 4-4 4-4-4z" fill="none" stroke="#d020d0" stroke-width="1.200"/>
          <g class="gl">
            <path d="M617 481V789M593 481h47M601 464l31 32M601 617l16 14M593 789h47M601 771l31 32"/>
            <path d="M478 796v45M517 796v45M555 796v45M478 818h77M463 833l33-30M502 833l33-30M541 833l31-30"/>
          </g>
          <text class="serif green" x="503" y="474" font-size="31" textLength="33" lengthAdjust="spacingAndGlyphs">BJ</text>
          <text class="serif green" x="775" y="329" font-size="31" textLength="65" lengthAdjust="spacingAndGlyphs">2A10</text>
          <text class="serif green" x="775" y="368" font-size="31" textLength="98" lengthAdjust="spacingAndGlyphs">A6@200</text>
          <text class="serif green" transform="translate(467 660) rotate(-90)" font-size="30" textLength="62" lengthAdjust="spacingAndGlyphs">1A10</text>
          <text class="serif green" transform="translate(585 633) rotate(-90)" font-size="30" textLength="17" lengthAdjust="spacingAndGlyphs">J</text>
          <text class="serif wh" x="624" y="569" font-size="31" textLength="48" lengthAdjust="spacingAndGlyphs">200</text>
          <text class="serif wh" x="624" y="723" font-size="31" textLength="48" lengthAdjust="spacingAndGlyphs">200</text>
          <text class="serif wh" x="482" y="861" font-size="31" textLength="31" lengthAdjust="spacingAndGlyphs">50</text>
          <text class="serif wh" x="521" y="861" font-size="31" textLength="31" lengthAdjust="spacingAndGlyphs">50</text>
          <text class="cjkw" x="640" y="329" font-size="28" textLength="60">角筋</text>
          <text class="cjkw" x="640" y="368" font-size="28" textLength="60">箍筋</text>
          <path class="redInk" d="M350 863Q400 876 510 882L643 884"/>
        </svg>
        <div class="rebarInfo">
          <span>钢筋信息：</span>
          <div class="select">A6@200<i class="caret"></i></div>
        </div>
        <div class="bjBox"><span>BJ</span></div>
      </div>
      <div class="dlgFoot">
        <span class="tbtn">{@render icon('angle', 26)}</span>
        <span class="tbtn lit">{@render icon('snap1', 26)}</span>
        <span class="tbtn lit">{@render icon('snap2', 26)}</span>
        <span class="tbtn">{@render icon('plus', 26)}</span>
        <span class="coordText">(X: 426 Y: -365)</span>
        <span class="grip">{@render icon('grip', 14)}</span>
      </div>
    </div>
  </div>

  <div class="status">
    <span class="s coord">X = 9505 Y = -12859</span>
    <span class="s k a">层高：</span><span class="s v av">3.9</span>
    <span class="s k b">标高：</span><span class="s v bv">4.5~8.4</span>
    <span class="s c">1(40)</span>
    <span class="s k d">隐藏：</span><span class="s v dv">0</span>
    <span class="tbtn sb first">{@render icon('angle', 24)}</span>
    <span class="tbtn sb lit wideB">{@render icon('box', 24)}<i class="caret"></i></span>
    <span class="tbtn sb dis">{@render icon('cross', 24)}</span>
    <span class="tbtn sb wideB">{@render icon('ang2', 24)}<i class="caret"></i></span>
    <span class="tbtn sb wideB">{@render icon('plusd', 24)}<i class="caret"></i></span>
    <span class="tbtn sb txt w1">跨图层选择</span>
    <span class="tbtn sb txt w2">折线选择</span>
    <span class="hint">按鼠标左键指定第一个角点，或拾取构件图 250 FPS</span>
  </div>
  <div class="task">
    <span class="taskBtn"></span>
    <span class="clock">20:27</span>
  </div>
</div>

<style>
  :global(body) {
    margin: 0;
    background: #fff;
  }
  .app {
    width: 1918px;
    height: 1032px;
    overflow: hidden;
    display: flex;
    flex-direction: column;
    font-family: "Noto Sans CJK SC", "Noto Sans", sans-serif;
    font-size: 18px;
    color: #333;
    filter: blur(0.45px);
  }
  .ic {
    display: block;
    flex: none;
  }
  .caret {
    display: inline-block;
    flex: none;
    width: 0;
    height: 0;
    border-left: 3.5px solid transparent;
    border-right: 3.5px solid transparent;
    border-top: 5px solid #555;
  }
  .caret.big {
    margin-left: 10px;
    vertical-align: middle;
    border-left-width: 5px;
    border-right-width: 5px;
    border-top-width: 7px;
  }

  /* top */
  .top {
    display: flex;
    height: 62px;
    flex: none;
    border-bottom: 2px solid #e6e7e8;
    box-sizing: border-box;
  }
  .logoCol {
    width: 68px;
    flex: none;
    padding: 12px 0 0 13px;
    box-sizing: border-box;
    background: #f4f5f5;
    border-right: 2px solid #e9eaea;
  }
  .logo {
    width: 42px;
    height: 43px;
    border-radius: 9px;
    background: linear-gradient(#dff3ff, #bfe6fb);
    display: flex;
    align-items: center;
    justify-content: center;
  }
  .topMain {
    flex: 1;
    min-width: 0;
  }
  .titleRow {
    display: flex;
    align-items: center;
    height: 30px;
  }
  .qat {
    width: 578px;
    flex: none;
    box-sizing: border-box;
    padding-left: 15px;
    display: flex;
    align-items: center;
  }
  .qbtn {
    width: 34.7px;
    flex: none;
    display: flex;
    align-items: center;
    gap: 7px;
  }
  .qbtn.wide {
    width: 48px;
  }
  .qend {
    margin-left: 2px;
  }
  .title {
    font-size: 18px;
    letter-spacing: 0.42px;
    color: #222;
    white-space: nowrap;
  }
  .winBtns {
    margin-left: auto;
    display: flex;
    align-items: center;
  }
  .wmin {
    width: 9px;
    height: 5px;
    background: #666;
    margin-top: 6px;
  }
  .wrest {
    width: 10px;
    height: 13px;
    border: 2px solid #666;
    margin-left: 46px;
    box-sizing: border-box;
  }
  .wclose {
    margin: 0 19px 0 42px;
    font-size: 17px;
    color: #444;
  }
  .tabRow {
    display: flex;
    align-items: center;
    height: 30px;
  }
  .tabs {
    display: flex;
    margin-left: 6.5px;
    height: 30px;
    width: 1196px;
    flex: none;
  }
  .tab {
    padding: 0 19.5px;
    line-height: 32px;
    white-space: nowrap;
  }
  .tab.active {
    background: #5aa7f0;
    color: #fff;
    border-radius: 3px 3px 0 0;
  }
  .search {
    width: 366px;
    height: 25px;
    flex: none;
    box-sizing: border-box;
    border: 2px solid #e0e0e0;
    display: flex;
    align-items: center;
    justify-content: space-between;
    padding: 0 7px 0 3px;
    color: #c9c9c9;
    line-height: 20px;
  }
  .avatar {
    display: flex;
    margin-left: 15px;
  }
  .user {
    margin-left: 5px;
    color: #222;
    white-space: nowrap;
  }
  .userTools {
    display: flex;
    align-items: center;
    gap: 10px;
    margin-left: 16px;
  }
  .help {
    color: #8a8f96;
    font-size: 22px;
    display: flex;
    align-items: center;
    gap: 2px;
    line-height: 1;
  }
  .help .caret {
    border-top-color: #bbb;
  }

  /* ribbon */
  .ribbon {
    display: flex;
    height: 143px;
    flex: none;
    background: linear-gradient(#fff 45%, #eceeee);
    border-bottom: 3px solid #b9bcc0;
    box-sizing: content-box;
  }
  .group {
    height: 140px;
    box-sizing: border-box;
    border-right: 1px solid #dfe1e2;
    display: flex;
    flex-direction: column;
    flex: none;
    padding-top: 3px;
  }
  .gBody {
    display: flex;
    height: 108px;
  }
  .col {
    flex: none;
  }
  .rItem {
    height: 34.5px;
    display: flex;
    align-items: center;
    white-space: nowrap;
  }
  .rItem.off {
    color: #b4b6b8;
  }
  .rText {
    margin-left: 4px;
    margin-right: 8px;
  }
  .gLabel {
    text-align: center;
    margin-left: -12px;
    line-height: 28px;
    color: #333;
  }
  .bigSel {
    width: 60px;
    height: 101px;
    margin-top: 4px;
    background: #cbdaec;
    display: flex;
    flex-direction: column;
    align-items: center;
    padding-top: 3px;
    box-sizing: border-box;
    flex: none;
    margin-right: 7px;
  }
  .bigSel span {
    margin-top: 7px;
  }
  .bigDraw {
    width: 44px;
    display: flex;
    flex-direction: column;
    align-items: center;
    margin-right: 20px;
    padding-top: 6px;
    flex: none;
  }
  .bigDraw span {
    margin-top: 6px;
    white-space: nowrap;
    line-height: 26px;
  }
  .bigDraw.off {
    color: #aaa;
    margin-right: 14px;
  }
  .bigDraw:first-child span {
    font-weight: 700;
  }
  .drawCol {
    display: flex;
    flex-direction: column;
    gap: 10.5px;
    padding-top: 5px;
  }
  .floorBar {
    height: 40px;
    flex: none;
    background: #d9dadd;
    border-bottom: 2px solid #b4b6ba;
    display: flex;
    align-items: center;
    padding-left: 4px;
  }
  .floor {
    width: 76px;
    height: 32px;
    background: #fff;
    border: 1px solid #c6c8cc;
    box-sizing: border-box;
    line-height: 30px;
    padding-left: 3px;
    color: #222;
  }

  /* main area */
  .main {
    position: relative;
    height: 724px;
    flex: none;
    display: flex;
  }
  .nav {
    width: 82px;
    flex: none;
    display: flex;
    flex-direction: column;
    background: #fff;
    overflow: hidden;
  }
  .navHead {
    height: 50px;
    box-sizing: border-box;
    background: #dcdde0;
    padding: 16px 0 0 3px;
    flex: none;
  }
  .navTab {
    display: block;
    height: 34px;
    line-height: 32px;
    background: #ebecec;
    color: #9a9a9a;
    padding-left: 11px;
  }
  .navTools {
    height: 42px;
    flex: none;
    box-sizing: border-box;
    background: #eef0f0;
    border-top: 1px solid #d4d5d7;
    border-bottom: 1px solid #d4d5d7;
    padding: 8px 0 0 10px;
  }
  .navList {
    padding-top: 3px;
  }
  .navRow {
    height: 36px;
    display: flex;
    align-items: center;
    padding-left: 6px;
    gap: 8px;
    white-space: nowrap;
    color: #333;
  }
  .navSub {
    height: 36px;
    display: flex;
    align-items: center;
    padding-left: 66px;
  }
  .navSub.sel {
    background: linear-gradient(90deg, transparent 62px, #cfe0f3 62px);
  }
  .bgCanvas {
    width: 1315px;
    flex: none;
    background: #000;
    position: relative;
  }
  .drawing {
    position: absolute;
    inset: 0;
    width: 100%;
    height: 100%;
    display: block;
  }
  .w path, .w circle {
    fill: none;
    stroke: #c9c9c9;
    stroke-width: 1.8;
  }
  .w .thin {
    stroke-width: 1.2;
  }
  .cad {
    font-family: "Roboto", "Liberation Mono", monospace;
    font-weight: 100;
    fill: #00d000;
  }
  .cad.dim {
    fill: #00b400;
  }
  .redInk {
    fill: none;
    stroke: #fa3a3f;
    stroke-width: 5;
    stroke-linecap: round;
    stroke-linejoin: round;
  }
  .redInk.thinInk {
    stroke: #f5222d;
    stroke-width: 4;
  }

  /* cloud panel */
  .cloud {
    width: 477px;
    flex: none;
    position: relative;
    background: #fff;
    display: flex;
    flex-direction: column;
  }
  .cloudHead {
    height: 44px;
    flex: none;
    background: #3575c8;
    color: #cfe0f5;
    display: flex;
    align-items: center;
    justify-content: space-between;
    padding: 0 14px;
  }
  .cloudX {
    color: #c6d3e4;
    font-size: 18px;
    font-weight: 700;
  }
  .cloudTabs {
    height: 52px;
    flex: none;
    display: grid;
    grid-template-columns: 158px 159px 160px;
  }
  .cTab {
    background: #eeeeee;
    text-align: center;
    line-height: 50px;
    color: #7d7d7d;
    border-left: 1px solid #e2e2e2;
    border-bottom: 1px solid #e2e2e2;
    box-sizing: border-box;
  }
  .cTab.active {
    background: #fff;
    color: #3f9bf0;
    border: 0;
  }
  .cloudActs {
    height: 48px;
    flex: none;
    display: flex;
    align-items: center;
    padding-left: 14px;
    gap: 13px;
    color: #555;
    box-sizing: border-box;
    padding-top: 4px;
  }
  .act {
    display: flex;
    align-items: center;
    gap: 6px;
    white-space: nowrap;
  }
  .tree {
    font-size: 18px;
    word-spacing: 2px;
  }
  .tRow {
    height: 31.5px;
    display: flex;
    align-items: center;
    color: #444;
    white-space: nowrap;
  }
  .tRow.bold {
    font-weight: 700;
    color: #333;
  }
  .tRow.on {
    color: #2f8cf0;
    font-weight: 700;
  }
  .tBox {
    width: 16px;
    margin-right: 10px;
    flex: none;
  }
  .tText {
    flex: 1;
    min-width: 0;
  }
  .tSlot {
    width: 20px;
    flex: none;
    margin-right: 13px;
    display: flex;
    justify-content: center;
  }
  .eyeSlot {
    margin-right: 36px;
  }
  .treeInk {
    position: absolute;
    inset: 0;
    width: 100%;
    height: 100%;
    pointer-events: none;
  }

  /* right tools */
  .rTools {
    flex: 1;
    min-width: 0;
    background: #000;
    display: flex;
    flex-direction: column;
  }
  .rToolBar {
    height: 343px;
    background: #8c9199;
    border-bottom: 3px solid #e5e5e5;
    box-sizing: border-box;
    display: flex;
    flex-direction: column;
    align-items: center;
    gap: 8.5px;
    padding-top: 14px;
  }
  .rToolBar hr {
    width: 34px;
    margin: 0;
    border: 0;
    border-top: 1px solid #a9adb3;
  }
  .caret.dark {
    border-top-color: #3d4a60;
    border-left-width: 6px;
    border-right-width: 6px;
    border-top-width: 6px;
  }
  .rLine {
    height: 2px;
    background: #b9b9b9;
    margin-top: 92px;
    flex: none;
  }
  .rLine.first {
    margin-top: 233px;
  }

  /* section editor dialog */
  .dialog {
    position: absolute;
    left: 80px;
    top: -98px;
    width: 955px;
    height: 816px;
    display: flex;
    flex-direction: column;
    background: #dcdde0;
    box-sizing: border-box;
    border-right: 2px solid #c9cbcf;
    border-left: 2px solid #c9cbcf;
  }
  .dlgHead {
    height: 40px;
    flex: none;
    background: #2c7cdf;
    color: #e6f0fb;
    display: flex;
    align-items: center;
    justify-content: space-between;
    padding: 0 13px 0 12px;
    margin: 0 -2px;
  }
  .dlgX {
    color: #fff;
    font-size: 15px;
    font-weight: 700;
  }
  .dlgTools {
    height: 50px;
    flex: none;
    margin: 3px 0 1px 2px;
    background: #fff;
    display: flex;
    align-items: center;
    color: #555;
    padding-left: 9px;
    white-space: nowrap;
  }
  .tsep {
    width: 1px;
    height: 36px;
    background: #e2e2e2;
    flex: none;
  }
  .t1 { width: 37px; }
  .s1 { margin-left: 12px; }
  .radio {
    width: 19px;
    height: 19px;
    border: 2px solid #b6b6b6;
    border-radius: 50%;
    box-sizing: border-box;
    flex: none;
    background: #fff;
  }
  .radio.on {
    background: radial-gradient(#3c8fe6 0 3.5px, #fff 4.5px);
  }
  .r1 { margin-left: 8px; }
  .l1 { margin-left: 6px; width: 36px; }
  .r2 { margin-left: 24px; }
  .l2 { margin-left: 7px; width: 36px; }
  .s2 { margin-left: 3px; }
  .combo {
    margin-left: 9px;
    width: 56px;
    border-top: 1px solid #eee;
    border-bottom: 1px solid #eee;
    line-height: 34px;
    padding-left: 3px;
    box-sizing: border-box;
  }
  .dlgTools .caret { margin-left: 3px; }
  .m1 { margin-left: 12px; width: 72px; }
  .m2 { margin-left: 16px; width: 36px; }
  .m2.off { color: #c4c4c4; }
  .m3 { margin-left: 17px; width: 72px; }
  .s3 { margin-left: 12px; }
  .m4 { margin-left: 12px; width: 72px; }
  .m5 { margin-left: 17px; width: 72px; }
  .dlgCanvas {
    flex: 1;
    min-height: 0;
    background: #000;
    position: relative;
    margin-left: 2px;
    border-top: 1px solid #c4c6c9;
  }
  .grid line {
    stroke: #2f3640;
    stroke-width: 1.5;
    stroke-dasharray: 12 5 2 5;
  }
  .gl path {
    fill: none;
    stroke: #10e010;
    stroke-width: 1.4;
  }
  .serif {
    font-family: "Liberation Serif", serif;
  }
  .green { fill: #00c400; }
  .wh { fill: #e4e8ec; }
  .cjkw {
    font-family: "Noto Sans CJK SC", sans-serif;
    font-weight: 300;
    fill: #d5dae0;
  }
  .rebarInfo {
    position: absolute;
    left: 3px;
    top: 3px;
    width: 311px;
    height: 57px;
    background: #dfe6e8;
    display: flex;
    align-items: center;
    padding-left: 14px;
    box-sizing: border-box;
    color: #444;
    font-size: 18px;
    white-space: nowrap;
  }
  .select {
    position: absolute;
    left: 100px;
    top: 9px;
    width: 201px;
    height: 38px;
    box-sizing: border-box;
    border: 1px solid #c9c9c9;
    background: #fff;
    display: flex;
    align-items: center;
    padding-left: 8px;
    color: #555;
    letter-spacing: 0.4px;
  }
  .select .caret {
    position: absolute;
    right: 8px;
    top: 16px;
  }
  .bjBox {
    position: absolute;
    left: 457px;
    top: 387px;
    width: 131px;
    height: 32px;
    background: #fff;
    border: 1px solid #bbb;
    box-sizing: border-box;
    padding: 3px 0 0 3px;
  }
  .bjBox span {
    display: block;
    width: 21px;
    height: 24px;
    line-height: 24px;
    font-size: 17px;
    background: #f0f0f0;
    font-family: "Noto Sans", sans-serif;
    color: #333;
    text-align: center;
  }
  .dlgFoot {
    height: 48px;
    flex: none;
    display: flex;
    align-items: center;
    padding-left: 4px;
    position: relative;
    color: #555;
    font-size: 17px;
  }
  .tbtn {
    width: 37px;
    height: 37px;
    flex: none;
    background: #cdced1;
    border: 2px solid #b7b8bb;
    box-sizing: border-box;
    display: flex;
    align-items: center;
    justify-content: center;
    gap: 5px;
  }
  .tbtn.lit {
    background: #fff;
    border-color: #3f9bf0;
  }
  .coordText {
    margin: 0 0 4px 2px;
    white-space: nowrap;
    letter-spacing: 1.3px;
  }
  .grip {
    margin: 10px 3px 0 auto;
  }

  /* status bar */
  .status {
    height: 45px;
    flex: none;
    background: #dcdde0;
    display: flex;
    align-items: center;
    font-size: 17px;
    color: #444;
    white-space: nowrap;
    border-top: 1px solid #bfc0c3;
    box-sizing: border-box;
  }
  .s { flex: none; }
  .coord { width: 342px; padding-left: 3px; box-sizing: border-box; letter-spacing: 1.7px; }
  .k { width: 60px; }
  .a { width: 60px; }
  .av { width: 64px; }
  .bv { width: 141px; letter-spacing: 1px; }
  .c { width: 155px; }
  .d { width: 53px; }
  .dv { width: 100px; }
  .sb { height: 38px; }
  .sb.wideB { width: 54px; }
  .sb.dis { margin-left: 9px; background: #d3d4d7; }
  .sb.lit { margin-left: 5px; }
  .sb.wideB:not(.lit) { margin-left: 5px; }
  .sb.dis + .wideB { margin-left: 9px; }
  .sb.txt { margin-left: 5px; color: #555; }
  .w1 { width: 109px; }
  .w2 { width: 91px; }
  .hint {
    margin-left: 10px;
    color: #333;
    font-size: 17.7px;
  }
  .task {
    height: 12px;
    flex: none;
    margin-top: 1px;
    display: flex;
    overflow: hidden;
    background: linear-gradient(90deg, #1f2125, #3a2523 18%, #22262c 30%, #23272d 60%, #1e2024);
  }
  .taskBtn {
    width: 73px;
    margin-left: 470px;
    background: #52555c;
  }
  .clock {
    margin-left: auto;
    margin-right: 113px;
    color: #fff;
    font-size: 16px;
    line-height: 18px;
    padding-top: 7px;
  }
</style>
